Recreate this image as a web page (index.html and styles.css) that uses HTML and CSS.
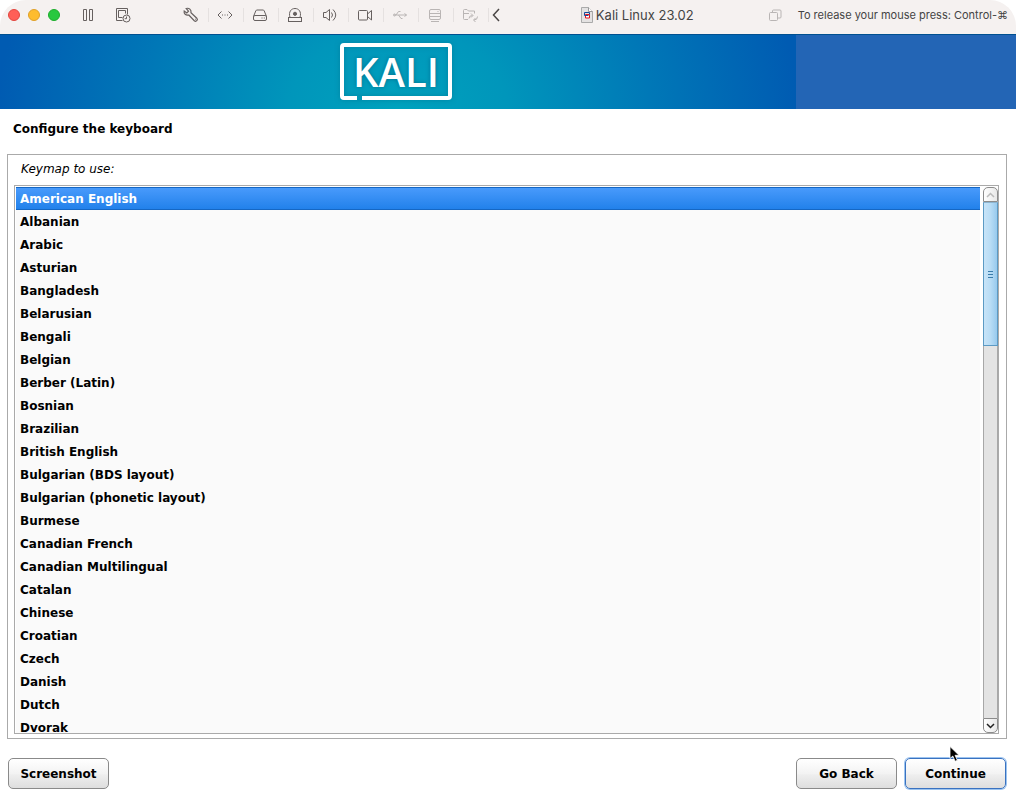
FILE: index.html
```html
<!DOCTYPE html>
<html lang="en">
<head>
    <meta charset="UTF-8">
    <meta name="viewport" content="width=device-width, initial-scale=1.0">
    <title>Kali Linux 23.02</title>
    <link rel="stylesheet" href="styles.css">
</head>
<body>
    <header class="titlebar">
        <div class="lights">
            <button class="light close" aria-label="Close"></button>
            <button class="light minimize" aria-label="Minimize"></button>
            <button class="light zoom" aria-label="Zoom"></button>
        </div>
        <div class="tools plain">
            <button class="tool" aria-label="Pause">
                <svg viewBox="0 0 20 20"><path d="M5.5 4.5h3v11h-3zM11.5 4.5h3v11h-3z"/></svg>
            </button>
            <button class="tool" aria-label="Snapshots">
                <svg viewBox="0 0 20 20"><path d="M9.500 15.500h-6v-12h11v6M5.500 12.500v-7h7v3M5.500 12.500h4"/><circle cx="13.500" cy="13.500" r="3.500"/><path d="M13.500 11.500v2.200h-1.800"/></svg>
            </button>
        </div>
        <div class="tools">
            <button class="tool" aria-label="Settings">
                <svg viewBox="0 0 20 20"><path d="M5.200 3.500C8 2.600 10.500 4.600 10 7.800l5.800 5.400c1.600 1.700-.7 4.100-2.500 2.500L7.800 10C4.800 10.800 2.600 8.500 3.200 6l2.600 1.900 1.700-1.700z" stroke-width="1.2"/><path d="M14 14.200h.8"/></svg>
            </button>
            <button class="tool" aria-label="Network">
                <svg viewBox="0 0 20 20"><path d="M6.500 6.500L3 10l3.500 3.500M13.500 6.500L17 10l-3.500 3.500"/><path d="M7 10h1M9.500 10h1M12 10h1"/></svg>
            </button>
            <button class="tool" aria-label="Hard disk">
                <svg viewBox="0 0 20 20"><path d="M3.500 11.500L5.800 5.800Q6.200 5 7 5h6q.8 0 1.200.8l2.300 5.700"/><rect x="3.500" y="10.500" width="13" height="5" rx="1.500"/><path d="M11.500 13h1M13.800 13h1"/></svg>
            </button>
            <button class="tool" aria-label="CD/DVD">
                <svg viewBox="0 0 20 20"><rect x="3.500" y="12.500" width="13" height="4"/><path d="M5 12.500C3.300 6.500 6.300 3.500 10 3.500s6.700 3 5 9"/><circle cx="10" cy="8.800" r="1.600" class="dot"/></svg>
            </button>
            <button class="tool" aria-label="Sound">
                <svg viewBox="0 0 20 20"><path d="M3.500 7.500H6L9.500 4.500v11L6 12.500H3.500zM11.500 7.500q2 2.500 0 5M13 4.500q5.500 5.500 0 11"/></svg>
            </button>
            <button class="tool" aria-label="Camera">
                <svg viewBox="0 0 20 20"><rect x="3.500" y="5.500" width="9" height="9.500" rx="1"/><path d="M12.500 9l4-3.500v9.500l-4-3.500z"/></svg>
            </button>
            <button class="tool off" aria-label="USB">
                <svg viewBox="0 0 20 20"><path d="M4 10h12.500M14.500 8.500l2 1.500-2 1.500M6 10l2.500-3.500h2M8.500 10l2.500 3.500h1.500"/><circle cx="4.500" cy="10" r="1"/></svg>
            </button>
            <button class="tool off" aria-label="Storage">
                <svg viewBox="0 0 20 20"><rect x="4.500" y="4.500" width="11" height="10" rx="1.500"/><path d="M4.500 8.500h11M4.500 11.500h11M6 16.500h8M12.500 6.500h1"/></svg>
            </button>
            <button class="tool off" aria-label="Shared folders">
                <svg viewBox="0 0 20 20"><path d="M8 14.500H4.500Q3.500 14.500 3.500 13.500V5.500Q3.500 4.500 4.500 4.500H7L8.500 6H14.500V8.500M3.500 8.500H9"/><path d="M9 13.500q0-3 3.500-3M11 8.500l2 2-2 2M17.500 11.500q0 3.500-3.500 3.500M15.500 13l-2 2 2 2"/></svg>
            </button>
            <button class="tool back" aria-label="Collapse">
                <svg viewBox="0 0 20 20"><path d="M13 4L7.500 10l5.500 6"/></svg>
            </button>
        </div>
        <div class="doc">
            <svg viewBox="0 0 12 16"><path d="M.5.5h7l4 4v11H.5z" fill="#e4e2e2" stroke="#aaa"/><path d="M7.500.5v4h4" fill="#fff" stroke="#999"/><path d="M4.500 7.500h4v3.500h-4z" fill="#fff" stroke="#e8131c"/><path d="M7.500 8.500h-4v-3h5v2" stroke="#15499a"/></svg>
            <span>Kali Linux 23.02</span>
        </div>
        <div class="hint">
            <svg viewBox="0 0 13 13"><rect x=".5" y="3.500" width="8" height="8" rx="1"/><path d="M3.500 3.500V2q0-1 1-1H11q1 0 1 1v6q0 1-1 1H8.500"/></svg>
            <span>To release your mouse press: Control-⌘</span>
        </div>
    </header>

    <div class="banner">
        <div class="banner-image">
            <div class="logo">KALI</div>
        </div>
    </div>

    <main>
        <h1>Configure the keyboard</h1>
        <div class="frame">
            <label for="keymap">Keymap to use:</label>
            <div class="list-box">
                <select id="keymap" size="24">
                    <option selected>American English</option>
                    <option>Albanian</option>
                    <option>Arabic</option>
                    <option>Asturian</option>
                    <option>Bangladesh</option>
                    <option>Belarusian</option>
                    <option>Bengali</option>
                    <option>Belgian</option>
                    <option>Berber (Latin)</option>
                    <option>Bosnian</option>
                    <option>Brazilian</option>
                    <option>British English</option>
                    <option>Bulgarian (BDS layout)</option>
                    <option>Bulgarian (phonetic layout)</option>
                    <option>Burmese</option>
                    <option>Canadian French</option>
                    <option>Canadian Multilingual</option>
                    <option>Catalan</option>
                    <option>Chinese</option>
                    <option>Croatian</option>
                    <option>Czech</option>
                    <option>Danish</option>
                    <option>Dutch</option>
                    <option>Dvorak</option>
                </select>
                <div class="scrollbar">
                    <button class="arrow up" aria-label="Scroll up">
                        <svg viewBox="0 0 9 6"><path d="M1 5l3.500-3.500L8 5"/></svg>
                    </button>
                    <div class="track">
                        <div class="thumb"><i></i><i></i><i></i></div>
                    </div>
                    <button class="arrow down" aria-label="Scroll down">
                        <svg viewBox="0 0 9 6"><path d="M1 1l3.500 3.500L8 1"/></svg>
                    </button>
                </div>
            </div>
        </div>
    </main>

    <footer>
        <button class="btn">Screenshot</button>
        <div class="right">
            <button class="btn">Go Back</button>
            <button class="btn default">Continue</button>
            <svg class="cursor" viewBox="0 0 12 17"><path d="M1 .5v12l2.800-2.500 2.300 5.300 2.300-1-2.300-5H10z"/></svg>
        </div>
    </footer>
</body>
</html>
```
FILE: styles.css
```css
* {
    box-sizing: border-box;
}
body {
    display: flex;
    flex-direction: column;
    height: 100vh;
    margin: 0;
    background: #fff;
    color: #000;
    font: bold 12px/23px "DejaVu Sans", sans-serif;
}
button {
    padding: 0;
    border: none;
    background: none;
    color: inherit;
    font: inherit;
}
svg {
    display: block;
    fill: none;
    stroke: currentColor;
}

/* window title bar */
.titlebar {
    display: flex;
    align-items: center;
    padding: 5px 8px 9px;
    border-radius: 26px 26px 0 0;
    background: #f5f1f0;
    color: #444;
    font: 13px/20px Inter, sans-serif;
}
.lights {
    display: flex;
    gap: 8px;
}
.light {
    width: 12px;
    height: 12px;
    border: 1px solid #e2463f;
    border-radius: 50%;
    background: #ff5f57;
}
.minimize {
    border-color: #e0a028;
    background: #febc2e;
}
.zoom {
    border-color: #1dad2b;
    background: #28c840;
}
.tools {
    display: flex;
    color: #66605f;
    margin-left: 33px;
}
.plain {
    margin-left: 10px;
}
.tool {
    display: flex;
    align-items: center;
    justify-content: center;
    width: 35px;
    height: 20px;
}
.tool svg {
    width: 20px;
    height: 20px;
}
.tool .dot {
    fill: currentColor;
}
.tools:not(.plain) .tool + .tool::before {
    content: "";
    width: 1px;
    height: 14px;
    margin-right: 6px;
    background: #e5e1e0;
}
.tools:not(.plain) .tool + .tool {
    justify-content: flex-start;
}
.tools .off {
    color: #b9b5b4;
}
.tools .back {
    width: 20px;
    color: #4a4645;
}
.tools:not(.plain) .back.tool::before {
    margin-right: -3px;
}
.back svg {
    flex: none;
    stroke-width: 1.5;
}
.doc {
    display: flex;
    align-items: center;
    gap: 3px;
    margin-left: auto;
}
.doc svg {
    width: 12px;
    height: 16px;
}
.hint {
    display: flex;
    align-items: center;
    gap: 16px;
    margin-left: 75px;
    font-size: 11px;
}
.hint svg {
    width: 13px;
    height: 13px;
    color: #b9b5b4;
}

/* installer banner */
.banner {
    border-top: 1px solid #005090;
    background: #2365b5;
}
.banner-image {
    display: flex;
    justify-content: center;
    width: 796px;
    max-width: 100%;
    padding: 8px 4px 9px 0;
    background: radial-gradient(ellipse 400px 300px at 50% 100%, #00a2bd, #0096bb 27%, #0078b7 63%, #005bb2);
}
.logo {
    position: relative;
    padding: 0 9px;
    border: 4px solid #fff;
    border-radius: 4px;
    color: #fff;
    font: 600 40px/49px "Open Sans", sans-serif;
    text-shadow: 0 0 4px #00708c;
    box-shadow: 0 0 5px #00708c80, inset 0 0 5px #00708c80;
}
.logo::after {
    content: "";
    position: absolute;
    left: 13px;
    bottom: -4px;
    width: 5px;
    height: 4px;
    background: #0097b5;
}

/* keymap question */
main {
    display: flex;
    flex: 1;
    flex-direction: column;
    min-height: 0;
    padding: 9px 9px 0 7px;
}
h1 {
    margin: 0 6px 13px;
    font-size: 12px;
}
.frame {
    display: flex;
    flex: 1;
    flex-direction: column;
    min-height: 0;
    padding: 3px 7px 4px 6px;
    border: 1px solid #aaa;
}
.frame label {
    margin: 0 7px 4px;
    font-style: italic;
    font-weight: normal;
}
.list-box {
    display: flex;
    flex: 1;
    gap: 3px;
    min-height: 0;
    padding: 1px 0 0 1px;
    border: 1px solid #aaa;
}
select {
    flex: 1;
    min-width: 0;
    height: 100%;
    padding: 0;
    border: none;
    border-radius: 0;
    outline: none;
    background: #fafafa;
    color: #000;
    font: inherit;
    scrollbar-width: none;
}
option {
    height: 23px;
    padding: 5px 4px 0;
    font-weight: bold;
}
option:checked {
    background: linear-gradient(#4a9bfc, #2080ea);
    color: #fff;
    box-shadow: inset 0 1px #1567c4, inset 0 -1px #1567c4;
}
.scrollbar {
    display: flex;
    flex-direction: column;
    width: 15px;
}
.arrow {
    display: flex;
    align-items: center;
    justify-content: center;
    height: 15px;
    border: 1px solid #8c8c8c;
    background: linear-gradient(90deg, #fff, #e8e8e8);
}
.arrow svg {
    width: 9px;
    height: 6px;
    stroke-width: 1.5;
}
.up {
    border-radius: 5px 5px 0 0;
    color: #bbb;
}
.down {
    border-radius: 0 0 5px 5px;
    color: #222;
}
.track {
    flex: 1;
    border: solid #a8a8a8;
    border-width: 0 1px;
    background: #e4e4e4;
}
.thumb {
    display: flex;
    flex-direction: column;
    align-items: center;
    justify-content: center;
    gap: 2px;
    height: 28%;
    margin: 0 -1px;
    border: 1px solid #5c9ac4;
    border-top-color: #8cb4d0;
    background: linear-gradient(90deg, #c8e4f8, #b8dcf5 50%, #98caee);
}
.thumb i {
    width: 5px;
    height: 1px;
    background: #3a7cab;
}

/* bottom buttons */
footer {
    display: flex;
    justify-content: space-between;
    padding: 19px 10px 8px 8px;
}
.right {
    position: relative;
    display: flex;
    gap: 8px;
}
.btn {
    width: 101px;
    height: 31px;
    padding-top: 1px;
    border: 1px solid #8a8a8a;
    border-radius: 5px;
    background: linear-gradient(#fff, #f3f3f3 50%, #eee 55%, #dedede);
}
.default {
    border-color: #3a72c0;
    box-shadow: 0 0 0 1px #9cc4f0;
}
.cursor {
    position: absolute;
    top: -12px;
    right: 45px;
    width: 12px;
    height: 17px;
    fill: #000;
    stroke: #fff;
    stroke-width: .8;
}
```
